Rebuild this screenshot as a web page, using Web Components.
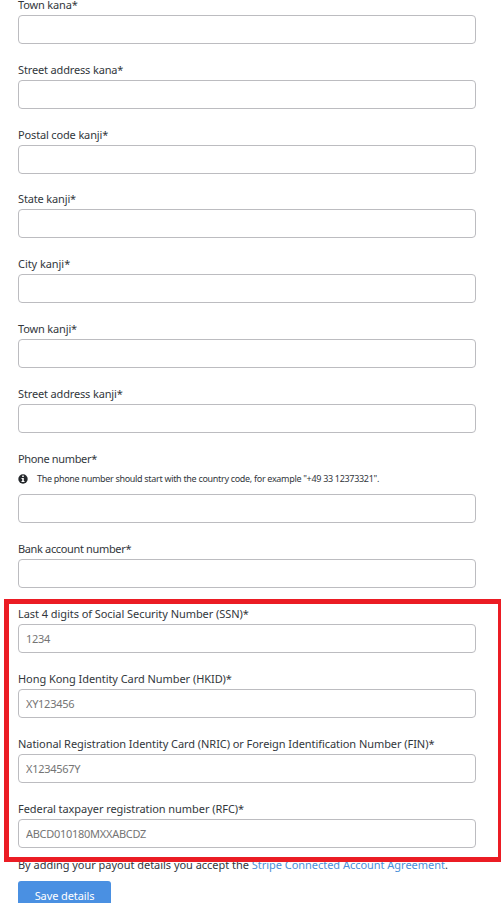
<!DOCTYPE html>
<html lang="en">
<head>
<meta charset="utf-8">
<title>Payout details</title>
<style>
html, body {
  margin: 0;
  height: 903px;
  overflow: hidden;
  background: #fff;
}
.tight {
  --label-spacing: -0.15px;
}
.tighter {
  --label-spacing: -0.35px;
}
</style>
</head>
<body>
<payout-form>
  <form-field class="tight" label="Town kana*"></form-field>
  <form-field class="tight" label="Street address kana*"></form-field>
  <form-field class="tight" label="Postal code kanji*"></form-field>
  <form-field class="tight" label="State kanji*"></form-field>
  <form-field label="City kanji*"></form-field>
  <form-field class="tight" label="Town kanji*"></form-field>
  <form-field class="tight" label="Street address kanji*"></form-field>
  <form-field class="tighter" label="Phone number*">
    <info-hint slot="hint">The phone number should start with the country code, for example "+49 33 12373321".</info-hint>
  </form-field>
  <form-field class="tighter" label="Bank account number*"></form-field>
  <highlight-group>
    <form-field label="Last 4 digits of Social Security Number (SSN)*" placeholder="1234"></form-field>
    <form-field label="Hong Kong Identity Card Number (HKID)*" placeholder="XY123456"></form-field>
    <form-field label="National Registration Identity Card (NRIC) or Foreign Identification Number (FIN)*" placeholder="X1234567Y"></form-field>
    <form-field label="Federal taxpayer registration number (RFC)*" placeholder="ABCD010180MXXABCDZ"></form-field>
  </highlight-group>
  <form-footer slot="footer"></form-footer>
</payout-form>

<script>
/**
 * Create a template element from markup.
 *
 * @param {string} html the markup.
 * @returns {HTMLTemplateElement} the template.
 */
const createTemplate = (html) => {
  const template = document.createElement('template')
  template.innerHTML = html
  return template
}

const formTemplate = createTemplate(`
<style>
:host {
  display: block;
  box-sizing: border-box;
  height: 903px;
  padding: 0 25px 0 18px;
  overflow: hidden;
  color: #32373c;
  font: 11px/16px "Noto Sans", "Open Sans", sans-serif;
}
#fields {
  display: flex;
  flex-direction: column;
  margin-top: -3px;
}
</style>
<div id="fields"><slot></slot></div>
<slot name="footer"></slot>
`)

const fieldTemplate = createTemplate(`
<style>
:host {
  display: block;
  padding-bottom: var(--field-gap, 17.8px);
}
label {
  display: block;
  height: 18px;
  line-height: 16px;
  letter-spacing: var(--label-spacing, -0.06px);
  white-space: nowrap;
}
input {
  display: block;
  box-sizing: border-box;
  width: 100%;
  height: 29px;
  margin: 0;
  padding: 0 7px;
  border: 1px solid #bcbcc0;
  border-radius: 4px;
  background: #fff;
  color: inherit;
  font: inherit;
  letter-spacing: -0.28px;
  outline: none;
}
input::placeholder {
  color: #757575;
  opacity: 1;
}
</style>
<label for="field"></label>
<slot name="hint"></slot>
<input id="field" type="text">
`)

const hintTemplate = createTemplate(`
<style>
:host {
  display: flex;
  align-items: center;
  gap: 9px;
  height: 16.4px;
  padding: 2px 0 7px;
  font-size: 9px;
  letter-spacing: -0.31px;
  white-space: nowrap;
}
svg {
  flex: none;
  width: 10px;
  height: 10px;
}
</style>
<svg viewBox="0 0 10 10" aria-hidden="true">
  <circle cx="5" cy="5" r="4.7" fill="#25282c"/>
  <path d="M4.2 1.6h1.6v1.4H4.2zM3.5 4h2.3v3h.7v1.1h-3V7h.7V5.100h-.7z" fill="#fff"/>
</svg>
<span><slot></slot></span>
`)

const highlightTemplate = createTemplate(`
<style>
:host {
  --field-gap: 18px;
  display: block;
  position: relative;
}
#frame {
  position: absolute;
  top: -7px;
  left: -14px;
  width: 489px;
  height: 253px;
  border: 5px solid #eb1c24;
  pointer-events: none;
}
</style>
<slot></slot>
<div id="frame"></div>
`)

const footerTemplate = createTemplate(`
<style>
:host {
  display: block;
}
p {
  margin: -9px 0 0;
  letter-spacing: -0.03px;
  white-space: nowrap;
}
a {
  color: #4a8fd8;
  text-decoration: none;
}
button {
  display: block;
  width: 93px;
  height: 30px;
  margin: 8px 0 0;
  padding: 0;
  border: 0;
  border-radius: 3px;
  background: #4a90e2;
  color: #fff;
  font: inherit;
  letter-spacing: -0.1px;
}
</style>
<p>By adding your payout details you accept the <a href="#">Stripe Connected Account Agreement</a>.</p>
<button type="button">Save details</button>
`)

/**
 * The form that holds all fields.
 */
customElements.define('payout-form', class extends HTMLElement {
  constructor () {
    super()
    this.attachShadow({ mode: 'open' }).appendChild(formTemplate.content.cloneNode(true))
  }
})

/**
 * A labelled text field with an optional hint.
 */
customElements.define('form-field', class extends HTMLElement {
  constructor () {
    super()
    this.attachShadow({ mode: 'open' }).appendChild(fieldTemplate.content.cloneNode(true))
    this._label = this.shadowRoot.querySelector('label')
    this._input = this.shadowRoot.querySelector('input')
  }

  static get observedAttributes () {
    return ['label', 'placeholder']
  }

  attributeChangedCallback (name, oldValue, newValue) {
    if (name === 'label') {
      this._label.textContent = newValue
    } else {
      this._input.placeholder = newValue
    }
  }
})

customElements.define('info-hint', class extends HTMLElement {
  constructor () {
    super()
    this.attachShadow({ mode: 'open' }).appendChild(hintTemplate.content.cloneNode(true))
  }
})

/**
 * Draws a red frame around the fields in it.
 */
customElements.define('highlight-group', class extends HTMLElement {
  constructor () {
    super()
    this.attachShadow({ mode: 'open' }).appendChild(highlightTemplate.content.cloneNode(true))
  }
})

customElements.define('form-footer', class extends HTMLElement {
  constructor () {
    super()
    this.attachShadow({ mode: 'open' }).appendChild(footerTemplate.content.cloneNode(true))
  }
})
</script>
</body>
</html>
